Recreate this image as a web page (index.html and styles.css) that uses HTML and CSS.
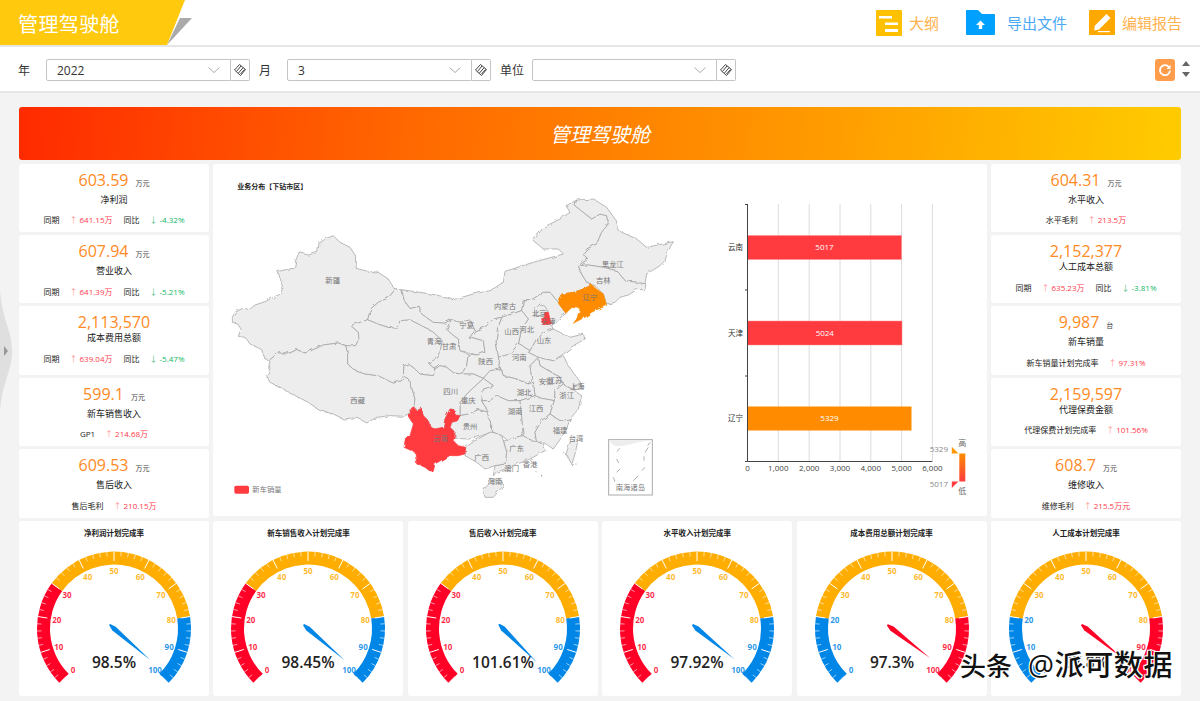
FILE: index.html
```html
<!DOCTYPE html>
<html lang="zh-CN">

<head>
    <meta charset="UTF-8">
    <meta name="viewport" content="width=device-width, initial-scale=1.0">
    <title>管理驾驶舱</title>
    <link rel="stylesheet" href="styles.css">
</head>

<body>
    <header class="topbar">
        <div class="brand">
            <svg class="brand-shape" width="192" height="45" viewBox="0 0 192 45">
                <polygon points="180,18 192,18 167,45" fill="#aaaaaa" />
                <polygon points="0,0 185,0 167,45 0,45" fill="#ffc90e" />
            </svg>
            <span class="brand-title">管理驾驶舱</span>
        </div>
        <nav class="actions">
            <a class="action action-outline">
                <svg width="26" height="26" viewBox="0 0 26 26">
                    <rect width="26" height="26" rx="1" fill="#ffc000" />
                    <rect x="3" y="6" width="13" height="2.5" fill="#fff" />
                    <rect x="9" y="12.5" width="13" height="2.5" fill="#fff" />
                    <rect x="9" y="19" width="13" height="3" fill="#fff" />
                </svg>
                <span>大纲</span>
            </a>
            <a class="action action-export">
                <svg width="29" height="25" viewBox="0 0 29 25">
                    <path d="M1 0H12L16 4H28Q29 4 29 5V24Q29 25 28 25H1Q0 25 0 24V1Q0 0 1 0Z" fill="#00a0ff" />
                    <path d="M14.5 10.5L19 15H16.2V19H12.8V15H10Z" fill="#fff" />
                </svg>
                <span>导出文件</span>
            </a>
            <a class="action action-edit">
                <svg width="26" height="25" viewBox="0 0 26 25">
                    <rect width="26" height="25" rx="1" fill="#ffa800" />
                    <path d="M17.5 4L21.5 8L10 19.5L5 20.5L6 15.5Z" fill="#fff" />
                    <rect x="9" y="21" width="12" height="1.2" fill="#fff" />
                </svg>
                <span>编辑报告</span>
            </a>
        </nav>
    </header>

    <section class="filters">
        <label class="filter-label label-year">年</label>
        <div class="combo"><span>2022</span>
            <svg class="chevron" width="12" height="6" viewBox="0 0 12 6"><path d="M0.5 0.5L6 5.5L11.5 0.5" /></svg>
        </div>
        <button class="clear-btn"><svg width="14" height="14" viewBox="0 0 14 14"><path d="M6.5 1.5L12.5 6.5L7.5 12.5L1.5 7Z" fill="#fff" stroke="#444" /><path d="M3.5 8.5L8 3M5.5 10L10 4.8M7.5 11L11.5 6.5" stroke="#444" /></svg></button>
        <label class="filter-label label-month">月</label>
        <div class="combo"><span>3</span>
            <svg class="chevron" width="12" height="6" viewBox="0 0 12 6"><path d="M0.5 0.5L6 5.5L11.5 0.5" /></svg>
        </div>
        <button class="clear-btn"><svg width="14" height="14" viewBox="0 0 14 14"><path d="M6.5 1.5L12.5 6.5L7.5 12.5L1.5 7Z" fill="#fff" stroke="#444" /><path d="M3.5 8.5L8 3M5.5 10L10 4.8M7.5 11L11.5 6.5" stroke="#444" /></svg></button>
        <label class="filter-label label-unit">单位</label>
        <div class="combo"><span></span>
            <svg class="chevron" width="12" height="6" viewBox="0 0 12 6"><path d="M0.5 0.5L6 5.5L11.5 0.5" /></svg>
        </div>
        <button class="clear-btn"><svg width="14" height="14" viewBox="0 0 14 14"><path d="M6.5 1.5L12.5 6.5L7.5 12.5L1.5 7Z" fill="#fff" stroke="#444" /><path d="M3.5 8.5L8 3M5.5 10L10 4.8M7.5 11L11.5 6.5" stroke="#444" /></svg></button>
        <button class="refresh-btn">
            <svg width="12" height="12" viewBox="0 0 12 12"><path d="M10 3.2A5 5 0 1 0 11 6.5" fill="none" stroke="#fff" stroke-width="1.8" /><path d="M11.5 0.8V5H7.5Z" fill="#fff" /></svg>
        </button>
        <div class="sort-arrows">
            <svg width="8" height="17" viewBox="0 0 8 17"><path d="M4 0L8 5H0Z M0 11H8L4 16Z" fill="#666" /></svg>
        </div>
    </section>

    <main class="content">
        <div class="banner">管理驾驶舱</div>

        <div class="board">
            <div class="stat-col">
                <div class="stat-card">
                    <div class="stat-value">603.59<small>万元</small></div>
                    <div class="stat-name">净利润</div>
                    <div class="stat-foot"><span>同期</span><i class="up">↑</i><b class="red">641.15万</b><span class="next">同比</span><i class="down">↓</i><b class="green">-4.32%</b></div>
                </div>
                <div class="stat-card">
                    <div class="stat-value">607.94<small>万元</small></div>
                    <div class="stat-name">营业收入</div>
                    <div class="stat-foot"><span>同期</span><i class="up">↑</i><b class="red">641.39万</b><span class="next">同比</span><i class="down">↓</i><b class="green">-5.21%</b></div>
                </div>
                <div class="stat-card">
                    <div class="stat-value">2,113,570</div>
                    <div class="stat-name">成本费用总额</div>
                    <div class="stat-foot"><span>同期</span><i class="up">↑</i><b class="red">639.04万</b><span class="next">同比</span><i class="down">↓</i><b class="green">-5.47%</b></div>
                </div>
                <div class="stat-card">
                    <div class="stat-value">599.1<small>万元</small></div>
                    <div class="stat-name">新车销售收入</div>
                    <div class="stat-foot"><span>GP1</span><i class="up">↑</i><b class="red">214.68万</b></div>
                </div>
                <div class="stat-card">
                    <div class="stat-value">609.53<small>万元</small></div>
                    <div class="stat-name">售后收入</div>
                    <div class="stat-foot"><span>售后毛利</span><i class="up">↑</i><b class="red">210.15万</b></div>
                </div>
            </div>

            <div class="map-panel">
                <svg class="china-map" width="480" height="345" viewBox="0 0 1440 1035">
                    <defs>
                        <!-- the borders are only rough polygons, this makes them jagged like real ones -->
                        <filter id="rough" x="-5%" y="-5%" width="110%" height="110%" color-interpolation-filters="sRGB">
                            <feTurbulence type="fractalNoise" baseFrequency="0.05" numOctaves="3" seed="3" />
                            <feDisplacementMap in="SourceGraphic" scale="10" />
                        </filter>
                    </defs>
                    <text class="map-title" x="52" y="60">业务分布【下钻市区】</text>
                    <g class="provinces" filter="url(#rough)">
                        <polygon points="37,445 45,430 63,420 77,418 87,423 105,408 135,398 180,375 190,355 183,330 173,308 205,300 223,298 227,275 237,250 265,258 293,250 297,222 320,208 340,200 360,220 390,235 410,265 408,298 435,305 475,310 505,330 525,362 505,387 475,400 452,420 443,452 393,470 415,490 417,510 407,530 385,532 355,522 310,528 280,542 255,552 230,542 210,552 175,552 150,572 135,570 125,542 90,525 75,505 55,502 63,480 53,465 37,460" />
                        <polygon points="150,572 175,552 210,552 230,542 255,552 280,542 310,528 355,522 377,530 383,550 383,585 400,600 435,615 475,620 505,635 520,642 545,635 550,620 565,630 575,655 585,690 582,712 565,735 550,742 510,740 470,745 440,762 410,745 370,750 340,735 300,725 265,700 225,680 190,660 150,640 140,620 150,600 145,575" />
                        <polygon points="443,452 475,465 505,475 530,477 540,455 570,452 605,470 635,485 667,515 660,550 640,575 625,582 645,600 640,620 620,618 600,615 585,600 565,585 552,590 550,620 545,635 520,642 505,635 475,620 435,615 400,600 383,585 383,550 377,530 407,530 417,510 415,490 393,470" />
                        <polygon points="525,362 505,387 475,400 452,420 443,452 475,465 505,475 530,477 540,455 570,452 605,470 635,485 667,515 660,550 640,575 625,582 645,600 660,590 680,595 700,612 725,615 740,590 745,555 720,545 715,510 695,495 680,480 695,450 675,462 640,460 605,435 598,412 570,418 553,395 545,362" />
                        <polygon points="545,362 600,370 650,378 700,392 760,375 810,365 850,340 855,307 940,280 1030,255 1015,240 970,240 940,215 970,175 1020,150 1050,130 1038,110 1070,93 1065,110 1090,130 1115,150 1140,135 1160,140 1165,165 1145,190 1130,225 1100,240 1088,255 1105,270 1075,290 1085,315 1100,340 1115,347 1090,360 1060,370 1025,375 1012,397 990,370 970,370 930,395 910,395 905,425 845,445 820,450 795,475 765,485 750,453 720,460 695,450 675,462 640,460 605,435 598,412 570,418 553,395" />
                        <polygon points="1070,93 1120,90 1160,115 1185,150 1195,185 1250,210 1280,235 1350,220 1360,218 1345,245 1335,275 1320,290 1280,315 1275,345 1250,340 1215,335 1190,305 1150,295 1105,288 1075,290 1105,270 1088,255 1100,240 1130,225 1145,190 1165,165 1160,140 1140,135 1115,150 1090,130 1065,110" />
                        <polygon points="1075,290 1105,288 1150,295 1190,305 1215,335 1250,340 1278,345 1275,362 1250,362 1225,378 1200,385 1185,400 1160,405 1150,375 1125,350 1115,347 1100,340 1085,315" />
                        <polygon points="910,395 930,395 970,370 990,370 1012,397 1038,433 1010,455 995,470 1000,480 975,490 950,510 930,545 905,530 895,525 905,480 925,450 905,425" />
                        <polygon points="945,420 960,405 975,412 985,430 965,440 945,440" />
                        <polygon points="905,425 925,450 905,480 895,525 870,555 835,565 828,520 832,480 845,445" />
                        <polygon points="695,450 720,460 750,453 765,485 745,510 755,505 790,515 795,550 770,558 745,550 720,545 715,510 695,495 680,480" />
                        <polygon points="765,485 795,475 820,450 845,445 832,480 828,520 835,565 842,600 810,605 790,628 760,615 725,615 740,590 745,555 770,558 795,550 790,515 755,505 745,510" />
                        <polygon points="950,510 975,490 1000,480 1020,490 1050,505 1090,495 1095,510 1060,530 1030,555 1000,575 975,570 955,565 925,550 930,545" />
                        <polygon points="835,565 870,555 895,525 905,530 930,545 925,550 955,565 930,590 935,625 925,645 890,630 850,620 842,600" />
                        <polygon points="955,565 975,570 1000,575 1030,560 1045,590 1070,625 1085,645 1060,660 1035,650 1015,620 985,605 960,590" />
                        <polygon points="1060,650 1085,645 1085,660 1062,662" />
                        <polygon points="930,590 955,565 960,590 985,605 1015,620 1030,645 1005,665 1003,695 965,688 945,680 940,640 925,645 935,625" />
                        <polygon points="790,628 810,605 842,600 850,620 890,630 925,645 940,640 945,680 900,695 865,695 835,682 805,695 785,695 790,660 820,650" />
                        <polygon points="720,740 720,700 740,675 790,628 820,650 790,660 785,695 805,730 775,722 745,735" />
                        <polygon points="552,590 565,585 585,600 600,615 620,618 640,620 645,600 660,590 680,595 700,612 725,615 760,615 790,628 740,675 720,700 720,740 705,738 702,722 690,720 675,750 670,775 645,780 630,772 625,755 610,740 605,718 590,725 582,712 585,690 575,655 565,630 550,620" />
                        <polygon points="712,755 720,740 745,735 775,722 805,730 805,745 815,765 815,788 800,795 770,805 745,810 705,808 705,790 690,775 695,760" />
                        <polygon points="805,695 835,682 865,695 900,695 905,740 910,800 885,805 865,815 845,800 815,788 815,765 805,745 805,730 785,695" />
                        <polygon points="900,695 945,680 965,688 1003,695 990,735 965,755 945,790 950,820 925,810 910,800 905,740" />
                        <polygon points="1003,695 1005,665 1030,645 1035,650 1060,662 1085,680 1075,720 1050,750 1020,755 990,735" />
                        <polygon points="990,735 1020,755 1050,750 1040,780 1025,805 1000,840 970,820 950,820 945,790 965,755" />
                        <polygon points="865,815 885,805 910,800 925,810 950,820 970,820 975,845 930,870 880,890 830,910 820,920 825,890 855,885 860,850 850,815" />
                        <polygon points="737,835 760,818 800,795 815,788 845,800 850,815 860,850 855,885 825,890 795,900 770,880 735,860" />
                        <polygon points="790,965 815,930 845,935 850,950 820,985 795,985" />
                        <polygon points="1050,820 1075,810 1065,855 1055,888 1038,855" />
                        <polygon class="yunnan" points="578,710 590,725 605,718 610,740 625,755 630,772 645,780 670,775 675,750 690,720 702,722 705,738 720,740 712,755 695,760 690,775 705,790 700,815 715,830 737,835 735,855 715,860 690,860 670,870 645,885 640,907 628,905 615,895 590,885 585,850 552,835 555,815 570,800 580,765 565,740 575,725" />
                        <polygon class="tianjin" points="975,430 985,430 990,450 995,465 970,467 965,450" />
                        <polygon class="liaoning" points="1115,347 1130,360 1150,375 1160,410 1135,420 1115,430 1095,445 1065,460 1060,463 1070,450 1080,420 1065,410 1050,420 1038,433 1020,410 1012,397 1025,375 1060,370 1090,360" />
                    </g>
                    <g class="islands">
                        <circle cx="1030" cy="850" r="1.5" /><circle cx="1068" cy="885" r="1.5" /><circle cx="948" cy="908" r="1.5" /><circle cx="965" cy="920" r="2" />
                    </g>
                    <g class="sea-inset">
                        <rect x="1166" y="812" width="131" height="166" />
                        <path class="sea-land" d="M1168 814H1295C1260 815 1230 830 1195 832C1180 832 1172 822 1168 814Z" />
                        <path class="sea-dash" d="M1190 848L1200 838M1190 870L1196 882M1272 862V875M1190 910L1200 900M1265 905L1275 895M1180 925L1185 938M1240 935L1255 920M1275 850L1285 835M1290 820L1283 830" />
                    </g>
                    <g class="map-labels">
                        <text x="338" y="333">新疆</text><text x="413" y="692">西藏</text><text x="642" y="515">青海</text>
                        <text x="687" y="530">甘肃</text><text x="692" y="666">四川</text><text x="745" y="692">重庆</text>
                        <text x="662" y="808">云南</text><text x="750" y="770">贵州</text><text x="785" y="863">广西</text>
                        <text x="890" y="838">广东</text><text x="825" y="935">海南</text><text x="875" y="898">澳门</text>
                        <text x="930" y="885">香港</text><text x="1068" y="808">台湾</text><text x="1020" y="783">福建</text>
                        <text x="948" y="716">江西</text><text x="885" y="727">湖南</text><text x="912" y="668">湖北</text>
                        <text x="1040" y="677">浙江</text><text x="1072" y="652">上海</text><text x="1005" y="633">江苏</text>
                        <text x="978" y="635">安徽</text><text x="898" y="563">河南</text><text x="797" y="575">陕西</text>
                        <text x="875" y="485">山西</text><text x="920" y="480">河北</text><text x="740" y="468">宁夏</text>
                        <text x="855" y="410">内蒙古</text><text x="972" y="513">山东</text><text x="958" y="433">北京</text>
                        <text x="985" y="457">天津</text><text x="1110" y="383">辽宁</text><text x="1150" y="332">吉林</text>
                        <text x="1178" y="285">黑龙江</text><text x="1231" y="953">南海诸岛</text>
                    </g>
                    <rect class="yunnan" x="43" y="950" width="44" height="24" rx="5" />
                    <text class="legend-text" x="97" y="970">新车销量</text>
                </svg>

                <svg class="bar-chart" width="280" height="345" viewBox="700 170 280 345">
                    <g class="grid">
                        <path d="M778.3 205V462M809.2 205V462M840 205V462M870.8 205V462M901.6 205V462M932.4 205V462" />
                    </g>
                    <rect class="bar-red" x="747.5" y="236.5" width="154" height="24" />
                    <rect class="bar-red" x="747.5" y="322" width="154.5" height="24" />
                    <rect class="bar-orange" x="747.5" y="407.5" width="164" height="24" />
                    <path class="axis" d="M747.5 205V462.5H932.4M745 205.5H747.5M745 291H747.5M745 377H747.5M745 462.5H747.5" />
                    <g class="bar-values">
                        <text x="824.5" y="251">5017</text><text x="824.8" y="336.5">5024</text><text x="829.5" y="422">5329</text>
                    </g>
                    <g class="bar-names">
                        <text x="743" y="251">云南</text><text x="743" y="336.5">天津</text><text x="743" y="422">辽宁</text>
                    </g>
                    <g class="x-ticks">
                        <text x="747.5" y="472">0</text><text x="778.3" y="472">1,000</text><text x="809.2" y="472">2,000</text>
                        <text x="840" y="472">3,000</text><text x="870.8" y="472">4,000</text><text x="901.6" y="472">5,000</text>
                        <text x="932.4" y="472">6,000</text>
                    </g>
                    <defs>
                        <linearGradient id="rangeFill" x1="0" y1="0" x2="0" y2="1">
                            <stop offset="0" stop-color="#ff8c00" />
                            <stop offset="1" stop-color="#ff3b3f" />
                        </linearGradient>
                    </defs>
                    <rect x="959.3" y="454.5" width="6" height="28" fill="url(#rangeFill)" />
                    <polygon points="951.8,447.8 958.4,454.5 951.8,454.5" fill="#ff9800" />
                    <polygon points="951.8,482.5 958.4,482.5 951.8,489" fill="#ff3b3f" />
                    <g class="range-labels">
                        <text x="948" y="453">5329</text><text x="948" y="488">5017</text>
                    </g>
                    <g class="range-ends">
                        <text x="962.3" y="447">高</text><text x="962.3" y="494.5">低</text>
                    </g>
                </svg>
            </div>

            <div class="stat-col">
                <div class="stat-card">
                    <div class="stat-value">604.31<small>万元</small></div>
                    <div class="stat-name">水平收入</div>
                    <div class="stat-foot"><span>水平毛利</span><i class="up">↑</i><b class="red">213.5万</b></div>
                </div>
                <div class="stat-card">
                    <div class="stat-value">2,152,377</div>
                    <div class="stat-name">人工成本总额</div>
                    <div class="stat-foot"><span>同期</span><i class="up">↑</i><b class="red">635.23万</b><span class="next">同比</span><i class="down">↓</i><b class="green">-3.81%</b></div>
                </div>
                <div class="stat-card">
                    <div class="stat-value">9,987<small>台</small></div>
                    <div class="stat-name">新车销量</div>
                    <div class="stat-foot"><span>新车销量计划完成率</span><i class="up">↑</i><b class="red">97.31%</b></div>
                </div>
                <div class="stat-card">
                    <div class="stat-value">2,159,597</div>
                    <div class="stat-name">代理保费金额</div>
                    <div class="stat-foot"><span>代理保费计划完成率</span><i class="up">↑</i><b class="red">101.56%</b></div>
                </div>
                <div class="stat-card">
                    <div class="stat-value">608.7<small>万元</small></div>
                    <div class="stat-name">维修收入</div>
                    <div class="stat-foot"><span>维修毛利</span><i class="up">↑</i><b class="red">215.5万元</b></div>
                </div>
            </div>
        </div>

        <div class="gauges" id="gauges"></div>
    </main>

    <div class="side-handle">
        <svg width="12" height="122" viewBox="0 0 12 122">
            <path d="M0 0C2 30 12 40 12 61C12 82 2 92 0 122Z" fill="#dfdfdf" />
            <path d="M4 56L8 61L4 66Z" fill="#999" />
        </svg>
    </div>

    <div class="watermark">头条<span class="watermark-name">@派可数据</span></div>

    <script src="gauges.js"></script>
</body>

</html>
```

FILE: styles.css
```css
* {
    box-sizing: border-box;
    margin: 0;
    padding: 0;
}

body {
    position: relative;
    width: 1200px;
    height: 701px;
    overflow: hidden;
    font-family: "Open Sans", "Noto Sans CJK SC", sans-serif;
    background-color: #f3f3f3;
    color: #222;
}

.topbar {
    display: flex;
    justify-content: space-between;
    height: 47px;
    background-color: white;
    border-bottom: 2px solid #e6e6e6;
}

.brand {
    position: relative;
    width: 192px;
    height: 45px;
}

.brand-shape {
    display: block;
}

.brand-title {
    position: absolute;
    top: 0;
    left: 18px;
    font-size: 20px;
    line-height: 49px;
    letter-spacing: 0.4px;
    color: white;
}

.actions {
    display: flex;
    align-items: center;
    padding-right: 18px;
}

.action {
    display: flex;
    align-items: center;
    font-size: 15px;
}

.action-outline {
    color: #ffb24d;
}

.action-outline span {
    margin-left: 7px;
}

.action-export {
    margin-left: 27px;
    color: #4aa8f5;
}

.action-export span {
    margin-left: 12px;
}

.action-edit {
    margin-left: 22px;
    color: #ffb24d;
}

.action-edit span {
    margin-left: 7px;
}

.filters {
    display: flex;
    align-items: center;
    height: 46px;
    padding: 1px 0 0 18px;
    background-color: white;
    border-bottom: 2px solid #e6e6e6;
    font-size: 12px;
    color: #333;
}

.filter-label {
    flex: none;
}

.label-year {
    width: 28px;
}

.label-month {
    width: 28px;
    margin-left: 9px;
}

.label-unit {
    width: 32px;
    margin-left: 9px;
}

.combo {
    display: flex;
    justify-content: space-between;
    align-items: center;
    width: 185px;
    height: 22px;
    padding: 1px 10px 0;
    background-color: white;
    border: 1px solid #c4c4c4;
    border-radius: 2px 0 0 2px;
}

.chevron {
    fill: none;
    stroke: #aaa;
}

.clear-btn {
    display: flex;
    justify-content: center;
    align-items: center;
    width: 19px;
    height: 22px;
    background-color: white;
    border: 1px solid #c4c4c4;
    border-left: none;
    border-radius: 0 2px 2px 0;
}

.refresh-btn {
    display: flex;
    justify-content: center;
    align-items: center;
    width: 20px;
    height: 22px;
    margin-left: 419px;
    background-color: #ff9d4d;
    border: none;
    border-radius: 3px;
}

.sort-arrows {
    display: flex;
    margin-left: 7px;
}

.content {
    width: 1181px;
    padding: 14px 0 0 19px;
}

.banner {
    height: 53px;
    padding-top: 1px;
    background: linear-gradient(95deg, #ff2a00 0%, #ff6a00 35%, #ff9500 65%, #ffcc00 100%);
    border-radius: 3px;
    font-size: 20px;
    font-style: italic;
    line-height: 53px;
    text-align: center;
    color: white;
}

.board {
    display: grid;
    grid-template-columns: 190px 1fr 190px;
    column-gap: 4px;
    margin-top: 3.7px;
}

.stat-col {
    display: flex;
    flex-direction: column;
    gap: 3.1px;
}

.stat-card {
    height: 68.3px;
    padding-top: 6px;
    background-color: white;
    border-radius: 3px;
    text-align: center;
}

.stat-value {
    font-size: 16px;
    line-height: 20px;
    color: #ff8a24;
}

.stat-value small {
    margin-left: 7px;
    font-size: 7px;
    color: #444;
}

.stat-name {
    font-size: 9px;
    line-height: 11px;
}

.stat-foot {
    display: flex;
    justify-content: center;
    align-items: center;
    height: 12px;
    margin-top: 9px;
    font-size: 8px;
}

.stat-foot i {
    margin: 0 2px 0 10px;
    font-style: normal;
}

.stat-foot b {
    font-weight: normal;
}

.stat-foot .next {
    margin-left: 11px;
}

.up {
    color: #ff9a9a;
}

.down {
    color: #5cc08a;
}

.red {
    color: #ff3b4a;
}

.green {
    color: #0fb866;
}

.map-panel {
    display: flex;
    height: 352px;
    padding: 5px 0 0 7px;
    background-color: white;
    border-radius: 3px;
}

.china-map,
.bar-chart {
    flex: none;
}

.map-title {
    font-size: 21px;
    font-weight: bold;
    fill: #222;
}

.provinces polygon {
    fill: #ededed;
    stroke: #999;
    stroke-width: 2;
    stroke-linejoin: round;
}

.provinces .yunnan,
.provinces .tianjin {
    fill: #ff3b3f;
    stroke: #ff3b3f;
}

.provinces .liaoning {
    fill: #ff8c00;
    stroke: #ff8c00;
}

.yunnan {
    fill: #ff3b3f;
}

.islands circle {
    fill: #888;
}

.sea-inset rect {
    fill: none;
    stroke: #aaa;
    stroke-width: 3;
}

.sea-land {
    fill: #ededed;
}

.sea-dash {
    fill: none;
    stroke: #888;
    stroke-width: 2;
}

.map-labels text {
    font-size: 22px;
    text-anchor: middle;
    dominant-baseline: central;
    fill: #777;
}

.legend-text {
    font-size: 22px;
    fill: #777;
}

.grid path {
    fill: none;
    stroke: #dcdcdc;
}

.axis {
    fill: none;
    stroke: #444;
}

.bar-red {
    fill: #ff3b3f;
    stroke: #ff8a8c;
    stroke-width: 0.5;
}

.bar-orange {
    fill: #ff8c00;
}

.bar-values text {
    font-size: 8px;
    text-anchor: middle;
    fill: white;
}

.bar-names text {
    font-size: 7.5px;
    text-anchor: end;
    fill: #333;
}

.x-ticks text {
    font-size: 8px;
    text-anchor: middle;
    fill: #444;
}

.range-labels text {
    font-size: 8px;
    text-anchor: end;
    fill: #888;
}

.range-ends text {
    font-size: 8px;
    text-anchor: middle;
    fill: #666;
}

.gauges {
    display: grid;
    grid-template-columns: repeat(6, 190px);
    column-gap: 4.4px;
    margin-top: 3.4px;
}

.gauge-card {
    height: 175px;
    background-color: white;
    border-radius: 3px;
}

.gauge-title {
    height: 18px;
    padding-top: 7px;
    font-size: 7.5px;
    font-weight: bold;
    line-height: 11px;
    text-align: center;
}

.gauge-card svg {
    display: block;
}

.gauge-label {
    font-size: 8px;
    font-weight: bold;
    fill-opacity: 0.85;
    text-anchor: middle;
    dominant-baseline: central;
}

.gauge-value {
    font-size: 15.5px;
    font-weight: 600;
    text-anchor: middle;
    dominant-baseline: central;
    fill: #222;
}

.side-handle {
    position: absolute;
    top: 290px;
    left: 0;
    line-height: 0;
}

.watermark {
    position: absolute;
    top: 646px;
    left: 960px;
    font-size: 26px;
    font-weight: 500;
    line-height: 38px;
    white-space: nowrap;
    color: #111;
    text-shadow: 1px 1px 0 white, -1px -1px 0 white, 1px -1px 0 white, -1px 1px 0 white;
}

.watermark-name {
    margin-left: 16px;
    font-size: 29px;
    letter-spacing: 0.6px;
}
```

FILE: gauges.js
```js
const RED = "#ff0027";
const GOLD = "#ffad00";
const BLUE = "#0086e6";

// bands are [upper limit, colour]
const NORMAL = [[30, RED], [80, GOLD], [100, BLUE]];
const REVERSED = [[20, BLUE], [80, GOLD], [100, RED]];

const gauges = [
    { title: "净利润计划完成率", text: "98.5%", value: 98.5, bands: NORMAL },
    { title: "新车销售收入计划完成率", text: "98.45%", value: 98.45, bands: NORMAL },
    { title: "售后收入计划完成率", text: "101.61%", value: 100, bands: NORMAL },
    { title: "水平收入计划完成率", text: "97.92%", value: 97.92, bands: NORMAL },
    { title: "成本费用总额计划完成率", text: "97.3%", value: 97.3, bands: REVERSED },
    { title: "人工成本计划完成率", text: "97.8%", value: 97.8, bands: REVERSED },
];

const CX = 95;
const CY = 89.6;
const OUTER = 77;
const INNER = 64;

function polar(value, r) {
    const a = (225 - 2.7 * value) * Math.PI / 180;
    return [CX + r * Math.cos(a), CY - r * Math.sin(a)];
}

function colorAt(value, bands) {
    return bands.find(band => value <= band[0])[1];
}

function bandPath(from, to) {
    const [x1, y1] = polar(from, OUTER);
    const [x2, y2] = polar(to, OUTER);
    const [x3, y3] = polar(to, INNER);
    const [x4, y4] = polar(from, INNER);
    return `M${x1} ${y1}A${OUTER} ${OUTER} 0 0 1 ${x2} ${y2}L${x3} ${y3}A${INNER} ${INNER} 0 0 0 ${x4} ${y4}Z`;
}

function buildGauge(gauge) {
    let parts = "";

    let from = 0;
    gauge.bands.forEach(([to, color]) => {
        parts += `<path d="${bandPath(from, to)}" fill="${color}"/>`;
        from = to;
    });

    // ticks every 2, long ones every 10
    for (let v = 0; v <= 100; v += 2) {
        const inner = v % 10 === 0 ? OUTER - 9.5 : OUTER - 4.5;
        const [x1, y1] = polar(v, OUTER);
        const [x2, y2] = polar(v, inner);
        parts += `<line x1="${x1}" y1="${y1}" x2="${x2}" y2="${y2}" stroke="white" stroke-width="${v % 10 === 0 ? 1 : 0.6}"/>`;
    }

    for (let v = 0; v <= 100; v += 10) {
        const [x, y] = polar(v, 58);
        parts += `<text class="gauge-label" x="${x}" y="${y}" fill="${colorAt(v, gauge.bands)}">${v}</text>`;
    }

    const a = (225 - 2.7 * gauge.value) * Math.PI / 180;
    const dx = Math.cos(a);
    const dy = -Math.sin(a);
    const point = (along, side) => `${CX + dx * along - dy * side},${CY + dy * along + dx * side}`;
    const needle = [point(-6, -1), point(-6, 0.6), point(0, 2.6), point(48, 0), point(0, -2.6)].join(" ");
    parts += `<polygon points="${needle}" fill="${colorAt(gauge.value, gauge.bands)}"/>`;

    parts += `<text class="gauge-value" x="${CX}" y="122.5">${gauge.text}</text>`;

    return `<div class="gauge-card"><div class="gauge-title">${gauge.title}</div>` +
        `<svg width="190" height="157" viewBox="0 0 190 157">${parts}</svg></div>`;
}

document.getElementById("gauges").innerHTML = gauges.map(buildGauge).join("");
```
